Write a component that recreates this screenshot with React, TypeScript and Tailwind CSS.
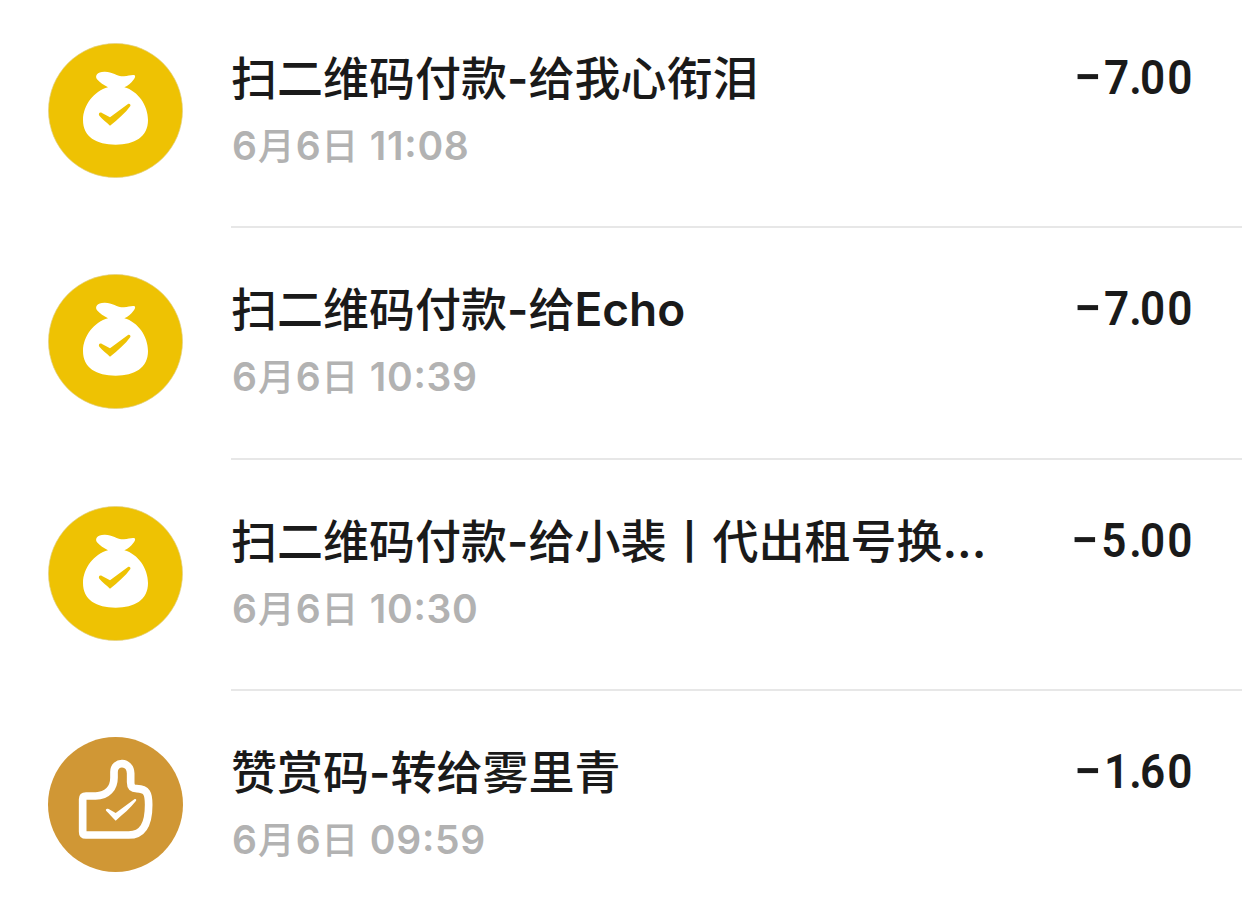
type IconKind = "bag" | "thumb";

interface Transaction {
  icon: IconKind;
  title: string;
  date: string;
  amount: string;
}

const TRANSACTIONS: Transaction[] = [
  { icon: "bag", title: "扫二维码付款-给我心衔泪", date: "6月6日 11:08", amount: "7.00" },
  { icon: "bag", title: "扫二维码付款-给Echo", date: "6月6日 10:39", amount: "7.00" },
  { icon: "bag", title: "扫二维码付款-给小裴丨代出租号换...", date: "6月6日 10:30", amount: "5.00" },
  { icon: "thumb", title: "赞赏码-转给雾里青", date: "6月6日 09:59", amount: "1.60" },
];

function BagIcon() {
  return (
    <svg viewBox="24 21 405 405" className="h-[135px] w-[135px] shrink-0">
      <circle cx="226.5" cy="223.5" r="201" fill="#eec203" stroke="#dfcf86" strokeWidth="2" />
      <path
        fill="#fff"
        d="M204 154C192 147 179 140 171 130C164 119 171 108 193 107C216 106 232 122 252 121C264 120 273 116 282 117C288 119 285 126 280 132C273 142 264 149 253 154C294 165 324 209 324 252C324 303 284 326 227 326C169 326 129 303 129 252C129 207 163 165 204 154Z"
      />
      <path
        fill="#eec203"
        d="M178 239C174 233 179 227 186 231L210 244L264 204C268 201 273 205 271 210C256 231 234 250 210 269C200 259 188 250 178 239Z"
      />
    </svg>
  );
}

function ThumbIcon() {
  return (
    <svg viewBox="24 21 405 405" className="h-[135px] w-[135px] shrink-0">
      <circle cx="226.5" cy="223.5" r="202.5" fill="#d09735" />
      <path
        fill="none"
        stroke="#fff"
        strokeWidth="23"
        strokeLinejoin="round"
        d="M138 198H167C202 198 222 174 222 143V126C222 92 271 92 272 130V157C272 170 278 176 290 176C321 177 326 190 326 224C326 281 310 315 266 315H138Q128 315 128 305V208Q128 198 138 198Z"
      />
      <path
        fill="#fff"
        d="M199 243C195 238 200 234 206 237L227 249L283 208C288 205 291 209 287 214C271 235 249 253 227 272C217 263 208 252 199 243Z"
      />
    </svg>
  );
}

// Latin runs are set a little heavier than the Chinese ones.
function MixedText({ text, latin, cjk }: { text: string; latin: string; cjk: string }) {
  const runs = text.match(/:|[^\x00-\x7f]+|[\x00-\x39\x3b-\x7f]+/g) ?? [];
  return (
    <>
      {runs.map((run, i) => {
        if (run === ":") {
          return (
            <span key={i} className={`${latin} inline-block -translate-y-[3px]`}>
              :
            </span>
          );
        }
        return (
          <span key={i} className={run.charCodeAt(0) < 128 ? latin : cjk}>
            {run}
          </span>
        );
      })}
    </>
  );
}

function Amount({ value }: { value: string }) {
  const [whole, cents] = value.split(".");
  return (
    <div className="flex whitespace-nowrap font-[Roboto,sans-serif] text-[49px] font-semibold leading-[68px] text-[#1a1a1a]">
      <span className="mr-[-7px]">−</span>
      <span className="-mr-[2px] origin-right scale-x-[0.9]">
        <span className={whole === "5" ? "tracking-[3px]" : "tracking-[0px]"}>{whole}</span>
        <span className="tracking-[-2px]">.</span>
        <span className="tracking-[2.4px]">{cents}</span>
      </span>
    </div>
  );
}

function TransactionRow({ item, last }: { item: Transaction; last: boolean }) {
  return (
    <li className="flex h-[231.3px] pl-12">
      <div className="pt-[46px]">{item.icon === "bag" ? <BagIcon /> : <ThumbIcon />}</div>
      <div
        className={`ml-12 flex min-w-0 flex-1 justify-between pr-[49px] pt-[47px] ${
          last ? "" : "border-b-2 border-[#e7e7e7]"
        }`}
      >
        <div className="whitespace-nowrap font-[Inter,'Noto_Sans_CJK_SC',sans-serif]">
          <h2 className="text-[46px] leading-[68px] text-[#1a1a1a]">
            <MixedText text={item.title} latin="font-semibold" cjk="font-medium" />
          </h2>
          <p className="pl-px text-[39px] leading-[68px] text-[#b2b2b2]">
            <MixedText
              text={item.date}
              latin="font-semibold tracking-[0.7px]"
              cjk="text-[37px] font-medium tracking-[1px]"
            />
          </p>
        </div>
        <Amount value={item.amount} />
      </div>
    </li>
  );
}

export default function App() {
  return (
    <main className="h-[914px] overflow-hidden bg-white">
      <ul className="-mt-[3px]">
        {TRANSACTIONS.map((item, i) => (
          <TransactionRow key={item.date} item={item} last={i === TRANSACTIONS.length - 1} />
        ))}
      </ul>
    </main>
  );
}
